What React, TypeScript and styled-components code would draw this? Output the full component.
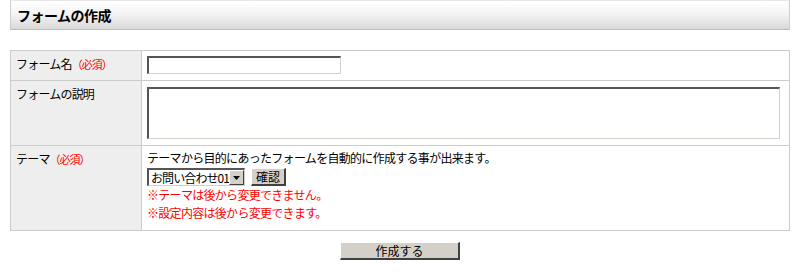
import styled, { createGlobalStyle } from "styled-components";

const GlobalStyle = createGlobalStyle`
  body {
    margin: 0;
    background: #ffffff;
    font-family: "Noto Sans CJK JP", "Liberation Sans", sans-serif;
    font-size: 12px;
    color: #000;
  }
`;

const Page = styled.div`
  width: 800px;
  padding: 0 10px;
  box-sizing: border-box;
`;

const TitleBar = styled.h1`
  margin: 0;
  height: 30px;
  box-sizing: border-box;
  padding: 0 6px;
  display: flex;
  align-items: center;
  border: 1px solid #cfcfcf;
  border-top-color: #e6e6e6;
  border-bottom-color: #bdbdbd;
  background: linear-gradient(to bottom, #ffffff 0%, #f4f4f4 45%, #d9d9d9 100%);
  font-size: 14px;
  font-weight: bold;
  letter-spacing: -0.5px;
`;

const FormTable = styled.table`
  margin-top: 20px;
  width: 100%;
  border-collapse: collapse;
  table-layout: fixed;
`;

const LabelCell = styled.th`
  width: 120px;
  background: #eeeeee;
  border: 1px solid #cccccc;
  text-align: left;
  vertical-align: top;
  font-weight: normal;
  padding: 6px 5px;
  line-height: 14px;
  letter-spacing: -0.8px;
`;

const FieldCell = styled.td<{ $h: number; $top: number }>`
  height: ${({ $h }) => $h}px;
  box-sizing: border-box;
  border: 1px solid #cccccc;
  vertical-align: top;
  padding: ${({ $top }) => $top}px 5px 0;
`;

const Required = styled.span`
  color: #ff0000;
  font-size: 11px;
  letter-spacing: -1px;
`;

const TextInput = styled.input`
  display: block;
  width: 194px;
  height: 18px;
  box-sizing: border-box;
  margin: 0;
  border-style: solid;
  border-width: 2px 1px 1px 2px;
  border-color: #555 #d4d0c8 #d4d0c8 #555;
  background: #fff;
`;

const TextArea = styled.textarea`
  display: block;
  width: 633px;
  height: 52px;
  box-sizing: border-box;
  margin: 0;
  resize: none;
  border-style: solid;
  border-width: 2px 1px 1px 2px;
  border-color: #555 #d4d0c8 #d4d0c8 #555;
  background: #fff;
`;

const Line = styled.p<{ $red?: boolean }>`
  margin: 0;
  line-height: 18px;
  letter-spacing: -0.7px;
  color: ${({ $red }) => ($red ? "#ff0000" : "#000")};
`;

const Controls = styled.div`
  display: flex;
  align-items: center;
  gap: 6px;
  margin: 1px 0 0;
`;

const SelectBox = styled.div`
  display: flex;
  width: 98px;
  height: 18px;
  box-sizing: border-box;
  border-style: solid;
  border-width: 2px 1px 1px 2px;
  border-color: #555 #d4d0c8 #d4d0c8 #555;
  background: #fff;
`;

const SelectValue = styled.span`
  flex: 1;
  padding-left: 2px;
  line-height: 15px;
  font-size: 12px;
  letter-spacing: -0.9px;
  white-space: nowrap;
  overflow: hidden;
`;

const SelectArrow = styled.span`
  width: 15px;
  display: flex;
  align-items: center;
  justify-content: center;
  background: #d4d0c8;
  border-style: solid;
  border-width: 1px;
  border-color: #fff #404040 #404040 #fff;
  box-sizing: border-box;
`;

const ClassicButton = styled.button<{ $w?: number }>`
  height: 18px;
  width: ${({ $w }) => ($w ? `${$w}px` : "auto")};
  padding: 0 4px;
  box-sizing: border-box;
  background: #d4d0c8;
  font-family: inherit;
  font-size: 12px;
  line-height: 14px;
  color: #000;
  border-style: solid;
  border-width: 1px 2px 2px 1px;
  border-color: #fff #404040 #404040 #fff;
`;

const Footer = styled.div`
  display: flex;
  justify-content: center;
  margin-top: 11px;
`;

export default function App() {
  return (
    <Page>
      <GlobalStyle />
      <TitleBar>フォームの作成</TitleBar>
      <FormTable>
        <tbody>
          <tr>
            <LabelCell>
              フォーム名<Required>（必須）</Required>
            </LabelCell>
            <FieldCell $h={30} $top={5}>
              <TextInput />
            </FieldCell>
          </tr>
          <tr>
            <LabelCell>フォームの説明</LabelCell>
            <FieldCell $h={65} $top={6}>
              <TextArea />
            </FieldCell>
          </tr>
          <tr>
            <LabelCell>
              テーマ<Required>（必須）</Required>
            </LabelCell>
            <FieldCell $h={85} $top={3}>
              <Line>テーマから目的にあったフォームを自動的に作成する事が出来ます。</Line>
              <Controls>
                <SelectBox>
                  <SelectValue>お問い合わせ01</SelectValue>
                  <SelectArrow>
                    <svg width="7" height="4" viewBox="0 0 7 4">
                      <path d="M0 0h7L3.5 4z" fill="#000" />
                    </svg>
                  </SelectArrow>
                </SelectBox>
                <ClassicButton>確認</ClassicButton>
              </Controls>
              <Line $red>※テーマは後から変更できません。</Line>
              <Line $red>※設定内容は後から変更できます。</Line>
            </FieldCell>
          </tr>
        </tbody>
      </FormTable>
      <Footer>
        <ClassicButton $w={120}>作成する</ClassicButton>
      </Footer>
    </Page>
  );
}
